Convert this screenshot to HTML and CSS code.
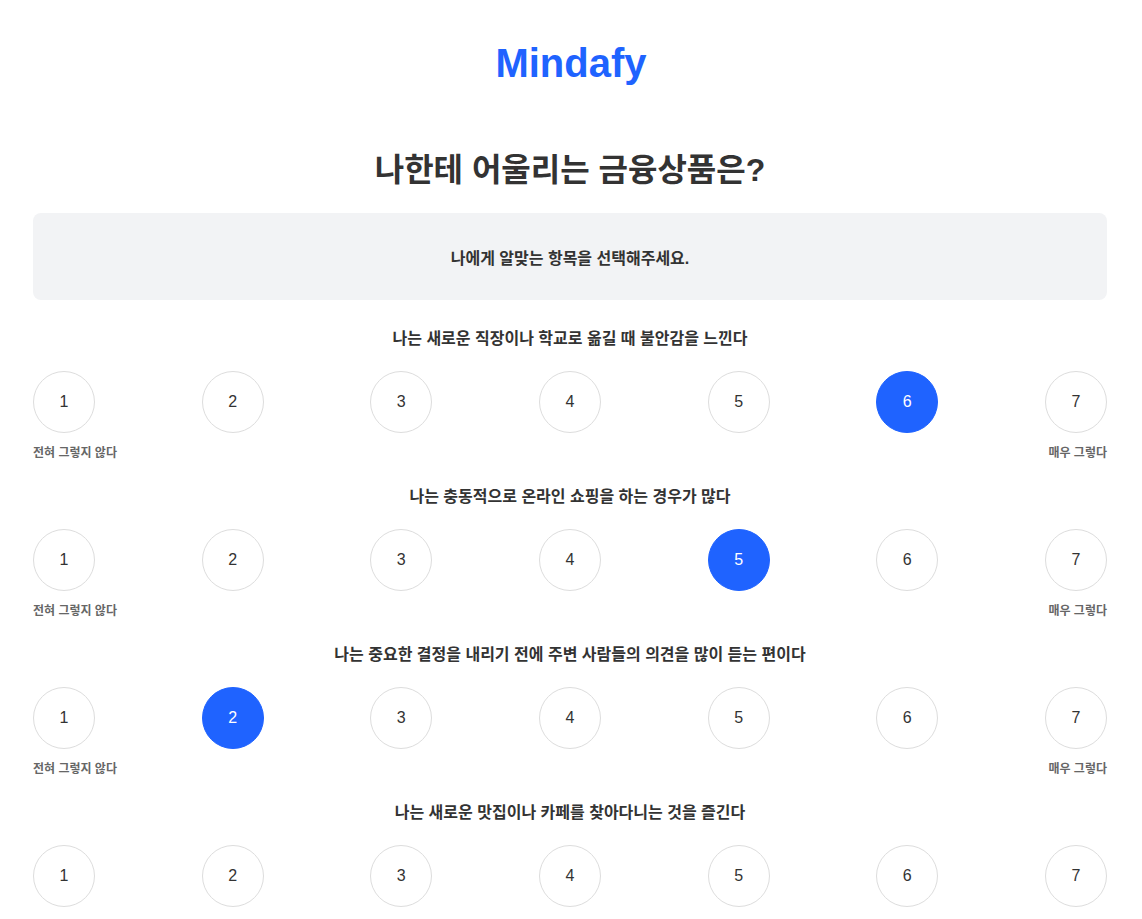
FILE: index.html
```html
<!DOCTYPE html>
<html lang="ko">
<head>
    <meta charset="UTF-8">
    <meta name="viewport" content="width=device-width, initial-scale=1.0">
    <title>Mindafy - 나한테 어울리는 금융상품은?</title>
    <link rel="stylesheet" href="styles.css">
</head>
<body>
    <header>
        <h1 class="logo">Mindafy</h1>
    </header>
    <main class="container">
        <h2 class="title">나한테 어울리는 금융상품은?</h2>
        <div class="notice">나에게 알맞는 항목을 선택해주세요.</div>

        <div class="question">
            <p class="question-text">나는 새로운 직장이나 학교로 옮길 때 불안감을 느낀다</p>
            <div class="options">
                <button class="option">1</button>
                <button class="option">2</button>
                <button class="option">3</button>
                <button class="option">4</button>
                <button class="option">5</button>
                <button class="option selected">6</button>
                <button class="option">7</button>
            </div>
            <div class="scale-labels">
                <span>전혀 그렇지 않다</span>
                <span>매우 그렇다</span>
            </div>
        </div>

        <div class="question">
            <p class="question-text">나는 충동적으로 온라인 쇼핑을 하는 경우가 많다</p>
            <div class="options">
                <button class="option">1</button>
                <button class="option">2</button>
                <button class="option">3</button>
                <button class="option">4</button>
                <button class="option selected">5</button>
                <button class="option">6</button>
                <button class="option">7</button>
            </div>
            <div class="scale-labels">
                <span>전혀 그렇지 않다</span>
                <span>매우 그렇다</span>
            </div>
        </div>

        <div class="question">
            <p class="question-text">나는 중요한 결정을 내리기 전에 주변 사람들의 의견을 많이 듣는 편이다</p>
            <div class="options">
                <button class="option">1</button>
                <button class="option selected">2</button>
                <button class="option">3</button>
                <button class="option">4</button>
                <button class="option">5</button>
                <button class="option">6</button>
                <button class="option">7</button>
            </div>
            <div class="scale-labels">
                <span>전혀 그렇지 않다</span>
                <span>매우 그렇다</span>
            </div>
        </div>

        <div class="question">
            <p class="question-text">나는 새로운 맛집이나 카페를 찾아다니는 것을 즐긴다</p>
            <div class="options">
                <button class="option">1</button>
                <button class="option">2</button>
                <button class="option">3</button>
                <button class="option">4</button>
                <button class="option">5</button>
                <button class="option">6</button>
                <button class="option">7</button>
            </div>
            <div class="scale-labels">
                <span>전혀 그렇지 않다</span>
                <span>매우 그렇다</span>
            </div>
        </div>
    </main>
</body>
</html>
```

FILE: styles.css
```css
:root {
    --primary: #1f63ff;
    --text: #333333;
    --muted: #666666;
    --box-bg: #f2f3f5;
    --border: #dddddd;
}

* {
    margin: 0;
    padding: 0;
    box-sizing: border-box;
}

body {
    font-family: "Liberation Sans", Arial, "Noto Sans CJK KR", sans-serif;
    color: var(--text);
    background: #ffffff;
}

header {
    padding-top: 40px;
    text-align: center;
}

.logo {
    font-size: 40px;
    line-height: 46px;
    font-weight: 700;
    color: var(--primary);
}

.container {
    padding: 65px 35px 0 33px;
}

.title {
    text-align: center;
    font-size: 32px;
    line-height: 38px;
    font-weight: 700;
    color: var(--text);
}

.notice {
    margin-top: 24px;
    height: 87px;
    display: flex;
    align-items: center;
    justify-content: center;
    background: var(--box-bg);
    border-radius: 8px;
    font-size: 16px;
    font-weight: 700;
}

.question {
    padding-top: 27px;
}

.question + .question {
    padding-top: 24px;
}

.question-text {
    text-align: center;
    font-size: 16px;
    line-height: 24px;
    font-weight: 700;
}

.options {
    margin-top: 20px;
    display: flex;
    justify-content: space-between;
}

.option {
    width: 62px;
    height: 62px;
    border-radius: 50%;
    border: 1px solid var(--border);
    background: #ffffff;
    color: var(--text);
    font-family: "Liberation Sans", Arial, sans-serif;
    font-size: 16px;
    cursor: pointer;
}

.option.selected {
    background: var(--primary);
    border-color: var(--primary);
    color: #ffffff;
}

.scale-labels {
    margin-top: 13px;
    display: flex;
    justify-content: space-between;
    font-size: 12px;
    line-height: 15px;
    font-weight: 700;
    color: var(--muted);
}
```
